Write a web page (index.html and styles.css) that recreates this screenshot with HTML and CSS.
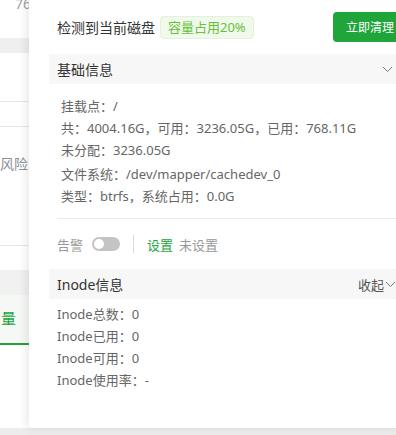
FILE: index.html
```html
<!DOCTYPE html>
<html lang="zh">
<head>
<meta charset="utf-8">
<link rel="stylesheet" href="styles.css">
</head>
<body>
<div class="page">
  <div class="bg-top">768.11G</div>
  <div class="bg-band"></div>
  <div class="bg-row h48"></div>
  <div class="bg-row h25"></div>
  <div class="bg-row h119"><span class="bg-risk">风险</span></div>
  <div class="bg-gap"></div>
  <div class="bg-band tall"></div>
  <div class="bg-tab"><span class="bg-tab-text">量</span></div>
  <div class="bg-rest"></div>
  <div class="bg-footer"></div>
</div>

<aside class="drawer">
  <div class="title-row">
    <div class="title-left">
      <span class="title">检测到当前磁盘</span>
      <span class="tag">容量占用20%</span>
    </div>
    <button class="btn">立即清理</button>
  </div>

  <div class="coll-head">
    <span>基础信息</span>
    <svg class="chev" width="11" height="7" viewBox="0 0 11 7"><path d="M1 1 L5.5 5.5 L10 1" fill="none" stroke="#777" stroke-width="1"/></svg>
  </div>
  <div class="basic-body">
    <div class="group">
      <div class="line">挂载点：/</div>
      <div class="line">共：4004.16G，可用：3236.05G，已用：768.11G</div>
      <div class="line">未分配：3236.05G</div>
    </div>
    <div class="group g2">
      <div class="line">文件系统：/dev/mapper/cachedev_0</div>
      <div class="line">类型：btrfs，系统占用：0.0G</div>
    </div>
  </div>
  <div class="divider"></div>
  <div class="alarm-row">
    <span class="muted">告警</span>
    <span class="switch"><span class="knob"></span></span>
    <span class="vsep"></span>
    <span class="link">设置</span>
    <span class="muted">未设置</span>
  </div>

  <div class="coll-head inode-head">
    <span>Inode信息</span>
    <span class="fold">收起<svg class="chev" width="11" height="7" viewBox="0 0 11 7"><path d="M1 1 L5.5 5.5 L10 1" fill="none" stroke="#777" stroke-width="1"/></svg></span>
  </div>
  <div class="inode-body">
    <div class="line">Inode总数：0</div>
    <div class="line">Inode已用：0</div>
    <div class="line">Inode可用：0</div>
    <div class="line">Inode使用率：-</div>
  </div>
</aside>
</body>
</html>
```

FILE: styles.css
```css
* { box-sizing: border-box; }
html, body {
  margin: 0;
  padding: 0;
}
body {
  width: 396px;
  height: 435px;
  overflow: hidden;
  position: relative;
  background: #fff;
  font-family: "Noto Sans", "Noto Sans CJK SC", sans-serif;
  font-size: 13px;
  color: #666;
}

/* background page */
.page {
  display: flex;
  flex-direction: column;
  width: 396px;
  height: 435px;
}
.bg-top {
  height: 44px;
  padding-left: 15px;
  margin-top: -6px;
  color: #9a9fa8;
  font-size: 14px;
  line-height: 20px;
}
.bg-band {
  height: 15px;
  background: #efefef;
}
.bg-row {
  border-bottom: 1px solid #e6e6e6;
}
.h48 { height: 49px; }
.h25 { height: 25px; }
.h119 {
  height: 119px;
  display: flex;
  align-items: flex-start;
  padding-top: 28px;
}
.bg-risk {
  margin-left: 0;
  color: #8a8f99;
  font-size: 14px;
  line-height: 18px;
}
.bg-gap { height: 24px; }
.bg-band.tall { height: 25px; background: #f1f1f1; }
.bg-tab {
  height: 50px;
  background: #f6f8f6;
  border-bottom: 2px solid #20a53a;
  width: 29px;
  padding-top: 13px;
}
.bg-tab-text {
  display: block;
  margin-left: 1px;
  color: #20a53a;
  font-size: 15px;
  line-height: 20px;
}
.bg-rest { flex: 1; }
.bg-footer {
  height: 7px;
  background: #ececec;
}

/* drawer overlay */
.drawer {
  position: absolute;
  left: 29px;
  top: 0;
  width: 376px;
  height: 428px;
  background: #fff;
  border-bottom-left-radius: 4px;
  box-shadow: -3px 0 10px rgba(0, 0, 0, 0.09);
  padding: 12px 0 0 20px;
  display: flex;
  flex-direction: column;
}
.title-row {
  height: 30px;
  padding-left: 8px;
  display: flex;
  align-items: center;
  justify-content: space-between;
}
.title-left {
  display: flex;
  align-items: center;
  gap: 5px;
}
.title {
  font-size: 14px;
  color: #333;
}
.tag {
  height: 23px;
  line-height: 21px;
  padding: 0 7px;
  background: #f0f9eb;
  border: 1px solid #e1f3d8;
  border-radius: 4px;
  color: #67c23a;
  font-size: 13px;
}
.btn {
  width: 72px;
  height: 30px;
  border: none;
  border-radius: 4px;
  background: #20a53a;
  color: #fff;
  font-family: inherit;
  font-size: 12px;
  padding: 0 0 0 13px;
  text-align: left;
  white-space: nowrap;
}

.coll-head {
  margin-top: 12px;
  height: 30px;
  background: #f7f7f7;
  padding: 0 12px 0 8px;
  display: flex;
  align-items: center;
  justify-content: space-between;
  font-size: 14px;
  color: #333;
}
.chev { display: block; }
.fold {
  display: flex;
  align-items: center;
  gap: 1px;
  font-size: 13px;
  color: #555;
  margin-right: -3px;
}

.basic-body {
  padding: 11px 0 0 12px;
}
.line {
  line-height: 22px;
  height: 22px;
  color: #666;
  white-space: nowrap;
}
.g2 { margin-top: 2px; }

.divider {
  margin: 11px 0 0 8px;
  height: 1px;
  background: #ebebeb;
}

.alarm-row {
  margin-top: 14px;
  height: 22px;
  padding-left: 8px;
  display: flex;
  align-items: center;
}
.muted { color: #999; }
.switch {
  width: 28px;
  height: 14px;
  border-radius: 7px;
  background: #c4c4c4;
  margin-left: 9px;
  position: relative;
}
.knob {
  position: absolute;
  left: 2px;
  top: 2px;
  width: 10px;
  height: 10px;
  border-radius: 50%;
  background: #fff;
}
.vsep {
  width: 1px;
  height: 18px;
  background: #dcdcdc;
  margin: 0 13px;
}
.link {
  color: #20a53a;
  margin-right: 6px;
}

.inode-head { margin-top: 14px; }
.inode-body {
  padding: 4px 0 0 8px;
}
```
